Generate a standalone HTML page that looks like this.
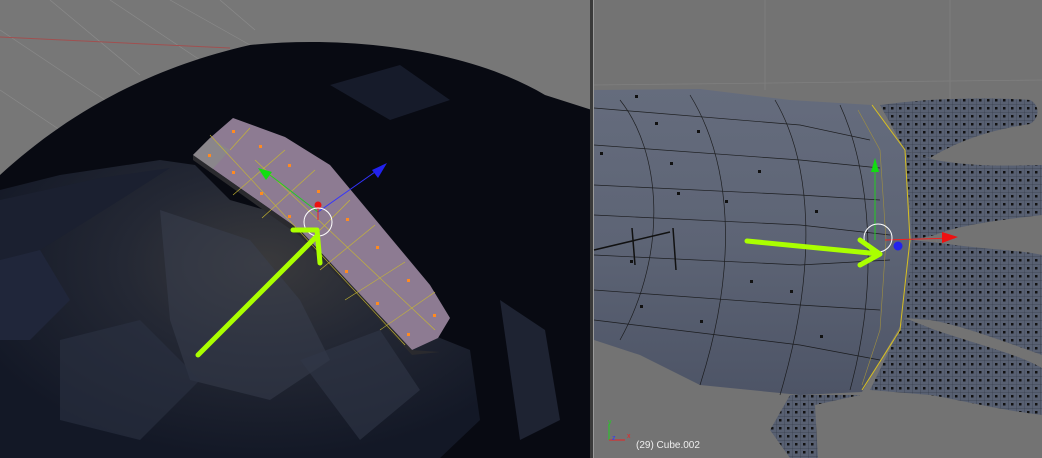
<!DOCTYPE html>
<html><head><style>
html,body{margin:0;padding:0;width:1042px;height:458px;overflow:hidden;background:#757575}
svg{display:block}
</style></head><body>
<svg width="1042" height="458" viewBox="0 0 1042 458" xmlns="http://www.w3.org/2000/svg">
<defs>
<radialGradient id="glow" cx="0.55" cy="0.35" r="0.65">
<stop offset="0" stop-color="#3a3a3c"/><stop offset="0.45" stop-color="#242834"/><stop offset="1" stop-color="#131826"/>
</radialGradient>
<linearGradient id="hand" x1="0" y1="0" x2="0" y2="1">
<stop offset="0" stop-color="#656c7d"/><stop offset="0.5" stop-color="#5d6475"/><stop offset="1" stop-color="#4d5466"/>
</linearGradient>
<pattern id="dots" width="8" height="8" patternUnits="userSpaceOnUse">
<rect width="8" height="8" fill="#586072"/><rect x="3" y="3" width="2.5" height="2.5" fill="#111"/>
<line x1="0" y1="0" x2="8" y2="0" stroke="#2a2e38" stroke-width="0.5"/><line x1="0" y1="0" x2="0" y2="8" stroke="#2a2e38" stroke-width="0.5"/>
</pattern>
</defs>
<rect x="0" y="0" width="592" height="458" fill="#777"/>
<g stroke="#8a8a8a" stroke-width="0.7" fill="none">
<line x1="50" y1="0" x2="140" y2="75"/><line x1="110" y1="0" x2="200" y2="60"/><line x1="170" y1="0" x2="250" y2="45"/>
<line x1="0" y1="90" x2="60" y2="130"/><line x1="0" y1="30" x2="120" y2="110"/><line x1="220" y1="0" x2="255" y2="30"/>
</g>
<line x1="0" y1="37" x2="230" y2="48" stroke="#a05050" stroke-width="1"/>
<path d="M0,175 C60,120 140,70 250,45 C350,35 470,50 545,95 L592,110 L592,458 L0,458 Z" fill="#080a12"/>
<path d="M0,190 L60,175 L160,160 L195,165 L230,200 L300,220 L420,330 L470,350 L480,420 L440,458 L0,458 Z" fill="url(#glow)"/>
<path d="M0,200 L100,178 L170,168 L120,200 L40,250 L0,260 Z" fill="#1b2030"/>
<path d="M0,260 L40,250 L70,300 L30,340 L0,340 Z" fill="#20263a"/>
<path d="M160,210 L250,240 L300,300 L330,360 L270,400 L190,380 L170,320 Z" fill="#3a4050" opacity="0.5"/>
<path d="M60,340 L140,320 L200,380 L140,440 L60,420 Z" fill="#2c3242" opacity="0.6"/>
<path d="M300,360 L380,330 L420,390 L360,440 Z" fill="#313748" opacity="0.6"/>
<path d="M500,300 L545,330 L560,420 L520,440 Z" fill="#1e2332"/>
<path d="M330,85 L400,65 L450,100 L390,120 Z" fill="#161b2a"/>
<path d="M233,118 L285,137 L330,165 L430,285 L450,318 L438,338 L412,350 L300,230 L193,155 L210,138 Z" fill="#8d7b92"/>
<path d="M193,155 L210,138 L230,150 L210,172 Z" fill="#8a8a8a" opacity="0.8"/>
<path d="M193,160 L300,236 L412,355 L440,352 L412,350 L300,230 L193,155 Z" fill="#2a2a2e"/>
<g stroke="#c8b830" stroke-width="0.6" fill="none">
<line x1="210" y1="135" x2="405" y2="345"/><line x1="250" y1="128" x2="230" y2="150"/><line x1="285" y1="150" x2="233" y2="195"/>
<line x1="315" y1="170" x2="262" y2="218"/><line x1="350" y1="200" x2="300" y2="250"/><line x1="375" y1="225" x2="320" y2="270"/>
<line x1="405" y1="262" x2="345" y2="300"/><line x1="435" y1="292" x2="380" y2="330"/><line x1="255" y1="160" x2="435" y2="330"/>
</g>
<g fill="#ff8a20">
<rect x="232" y="130" width="3" height="3"/><rect x="259" y="145" width="3" height="3"/><rect x="208" y="154" width="3" height="3"/>
<rect x="288" y="164" width="3" height="3"/><rect x="232" y="171" width="3" height="3"/><rect x="260" y="192" width="3" height="3"/>
<rect x="317" y="190" width="3" height="3"/><rect x="288" y="215" width="3" height="3"/><rect x="346" y="218" width="3" height="3"/>
<rect x="376" y="246" width="3" height="3"/><rect x="345" y="270" width="3" height="3"/><rect x="407" y="279" width="3" height="3"/>
<rect x="376" y="302" width="3" height="3"/><rect x="433" y="314" width="3" height="3"/><rect x="407" y="333" width="3" height="3"/>
</g>
<line x1="318" y1="212" x2="270" y2="175" stroke="#2c2" stroke-width="1"/>
<path d="M258,168 L272,172 L266,180 Z" fill="#1d1"/>
<line x1="318" y1="212" x2="375" y2="172" stroke="#33f" stroke-width="1"/>
<path d="M387,163 L372,170 L378,178 Z" fill="#22e"/>
<line x1="318" y1="205" x2="318" y2="220" stroke="#e22" stroke-width="1"/>
<circle cx="318" cy="205" r="3.5" fill="#e11"/>
<circle cx="318" cy="222" r="14" fill="none" stroke="#fff" stroke-width="1"/>
<path d="M198,355 L316,237 M293,230 L317,230 L320,263" stroke="#aaff00" stroke-width="5" fill="none" stroke-linecap="round" stroke-linejoin="round"/>
<rect x="590" y="0" width="3" height="458" fill="#3a3a3a"/>
<rect x="593" y="0" width="1" height="458" fill="#9a9a9a"/>
<rect x="594" y="0" width="448" height="458" fill="#737373"/>
<g stroke="#7f7f7f" stroke-width="0.8"><line x1="765" y1="0" x2="765" y2="90"/><line x1="950" y1="0" x2="950" y2="110"/><line x1="594" y1="85" x2="1042" y2="80"/></g>
<path d="M880,105 C930,98 990,97 1030,100 C1040,105 1040,118 1030,124 C990,130 960,140 930,158 L905,150 Z" fill="url(#dots)"/>
<path d="M905,150 L935,160 C980,168 1020,165 1042,165 L1042,215 C1000,220 960,225 935,235 L912,240 Z" fill="url(#dots)"/>
<path d="M912,240 L940,243 C990,250 1020,250 1042,255 L1042,355 C1000,340 960,325 930,320 L905,318 Z" fill="url(#dots)"/>
<path d="M905,318 L935,330 C980,345 1020,355 1042,368 L1042,415 C1000,410 960,400 930,395 L870,390 Z" fill="url(#dots)"/>
<path d="M790,395 L860,395 L815,405 L818,458 L790,458 L770,430 Z" fill="url(#dots)"/>
<path d="M594,90 L700,89 L790,100 L872,105 L905,150 L912,240 L905,318 L862,392 L800,395 L700,385 L640,355 L594,340 Z" fill="url(#hand)"/>
<g stroke="#111" stroke-width="0.7" fill="none" opacity="0.85">
<path d="M594,108 L800,125 L870,140"/><path d="M594,145 L800,160 L880,168"/><path d="M594,185 L800,195 L880,200"/>
<path d="M594,215 L800,225 L890,235"/><path d="M594,255 L800,265 L890,260"/><path d="M594,290 L800,305 L880,310"/><path d="M594,320 L800,345 L880,360"/>
<path d="M620,100 C660,150 670,250 620,340"/><path d="M690,95 C730,160 740,260 700,385"/><path d="M775,100 C810,160 820,260 780,395"/><path d="M840,105 C870,170 880,280 850,390"/>
</g>
<path d="M872,105 L905,150 L910,240 L900,330 L862,390" stroke="#d8c020" stroke-width="1" fill="none"/>
<path d="M858,110 L880,150 L886,240 L880,330 L862,385" stroke="#a09040" stroke-width="0.6" fill="none"/>
<g fill="#111">
<rect x="635" y="95" width="3" height="3"/><rect x="655" y="122" width="3" height="3"/><rect x="670" y="162" width="3" height="3"/>
<rect x="697" y="130" width="3" height="3"/><rect x="677" y="192" width="3" height="3"/><rect x="758" y="170" width="3" height="3"/>
<rect x="815" y="210" width="3" height="3"/><rect x="750" y="280" width="3" height="3"/><rect x="640" y="305" width="3" height="3"/>
<rect x="700" y="320" width="3" height="3"/><rect x="790" y="290" width="3" height="3"/><rect x="630" y="260" width="3" height="3"/>
<rect x="600" y="152" width="3" height="3"/><rect x="725" y="200" width="3" height="3"/><rect x="820" y="335" width="3" height="3"/>
</g>
<path d="M594,250 L670,232 M632,228 L635,265 M673,228 L676,270" stroke="#111" stroke-width="1.5" fill="none"/>
<line x1="875" y1="240" x2="875" y2="168" stroke="#2c2" stroke-width="1"/>
<path d="M875,158 L871,172 L879,172 Z" fill="#1d1"/>
<line x1="885" y1="240" x2="955" y2="238" stroke="#e22" stroke-width="1"/>
<path d="M958,237 L942,232 L942,243 Z" fill="#e11"/>
<circle cx="898" cy="246" r="4.5" fill="#22e"/>
<circle cx="878" cy="238" r="14" fill="none" stroke="#fff" stroke-width="1"/>
<path d="M747,241 L880,254 M860,240 L880,254 L860,265" stroke="#aaff00" stroke-width="5" fill="none" stroke-linecap="round" stroke-linejoin="round"/>
<line x1="609" y1="424" x2="609" y2="440" stroke="#2c2" stroke-width="1"/>
<line x1="609" y1="440" x2="625" y2="440" stroke="#e22" stroke-width="1"/>
<text x="608" y="424" font-family="Liberation Sans, sans-serif" font-size="7" fill="#2c2">y</text>
<text x="612" y="440" font-family="Liberation Sans, sans-serif" font-size="7" fill="#33f">z</text>
<text x="627" y="438" font-family="Liberation Sans, sans-serif" font-size="7" fill="#e22">x</text>
<text x="636" y="448" font-family="Liberation Sans, sans-serif" font-size="10" fill="#eee">(29) Cube.002</text>
</svg>
</body></html>
